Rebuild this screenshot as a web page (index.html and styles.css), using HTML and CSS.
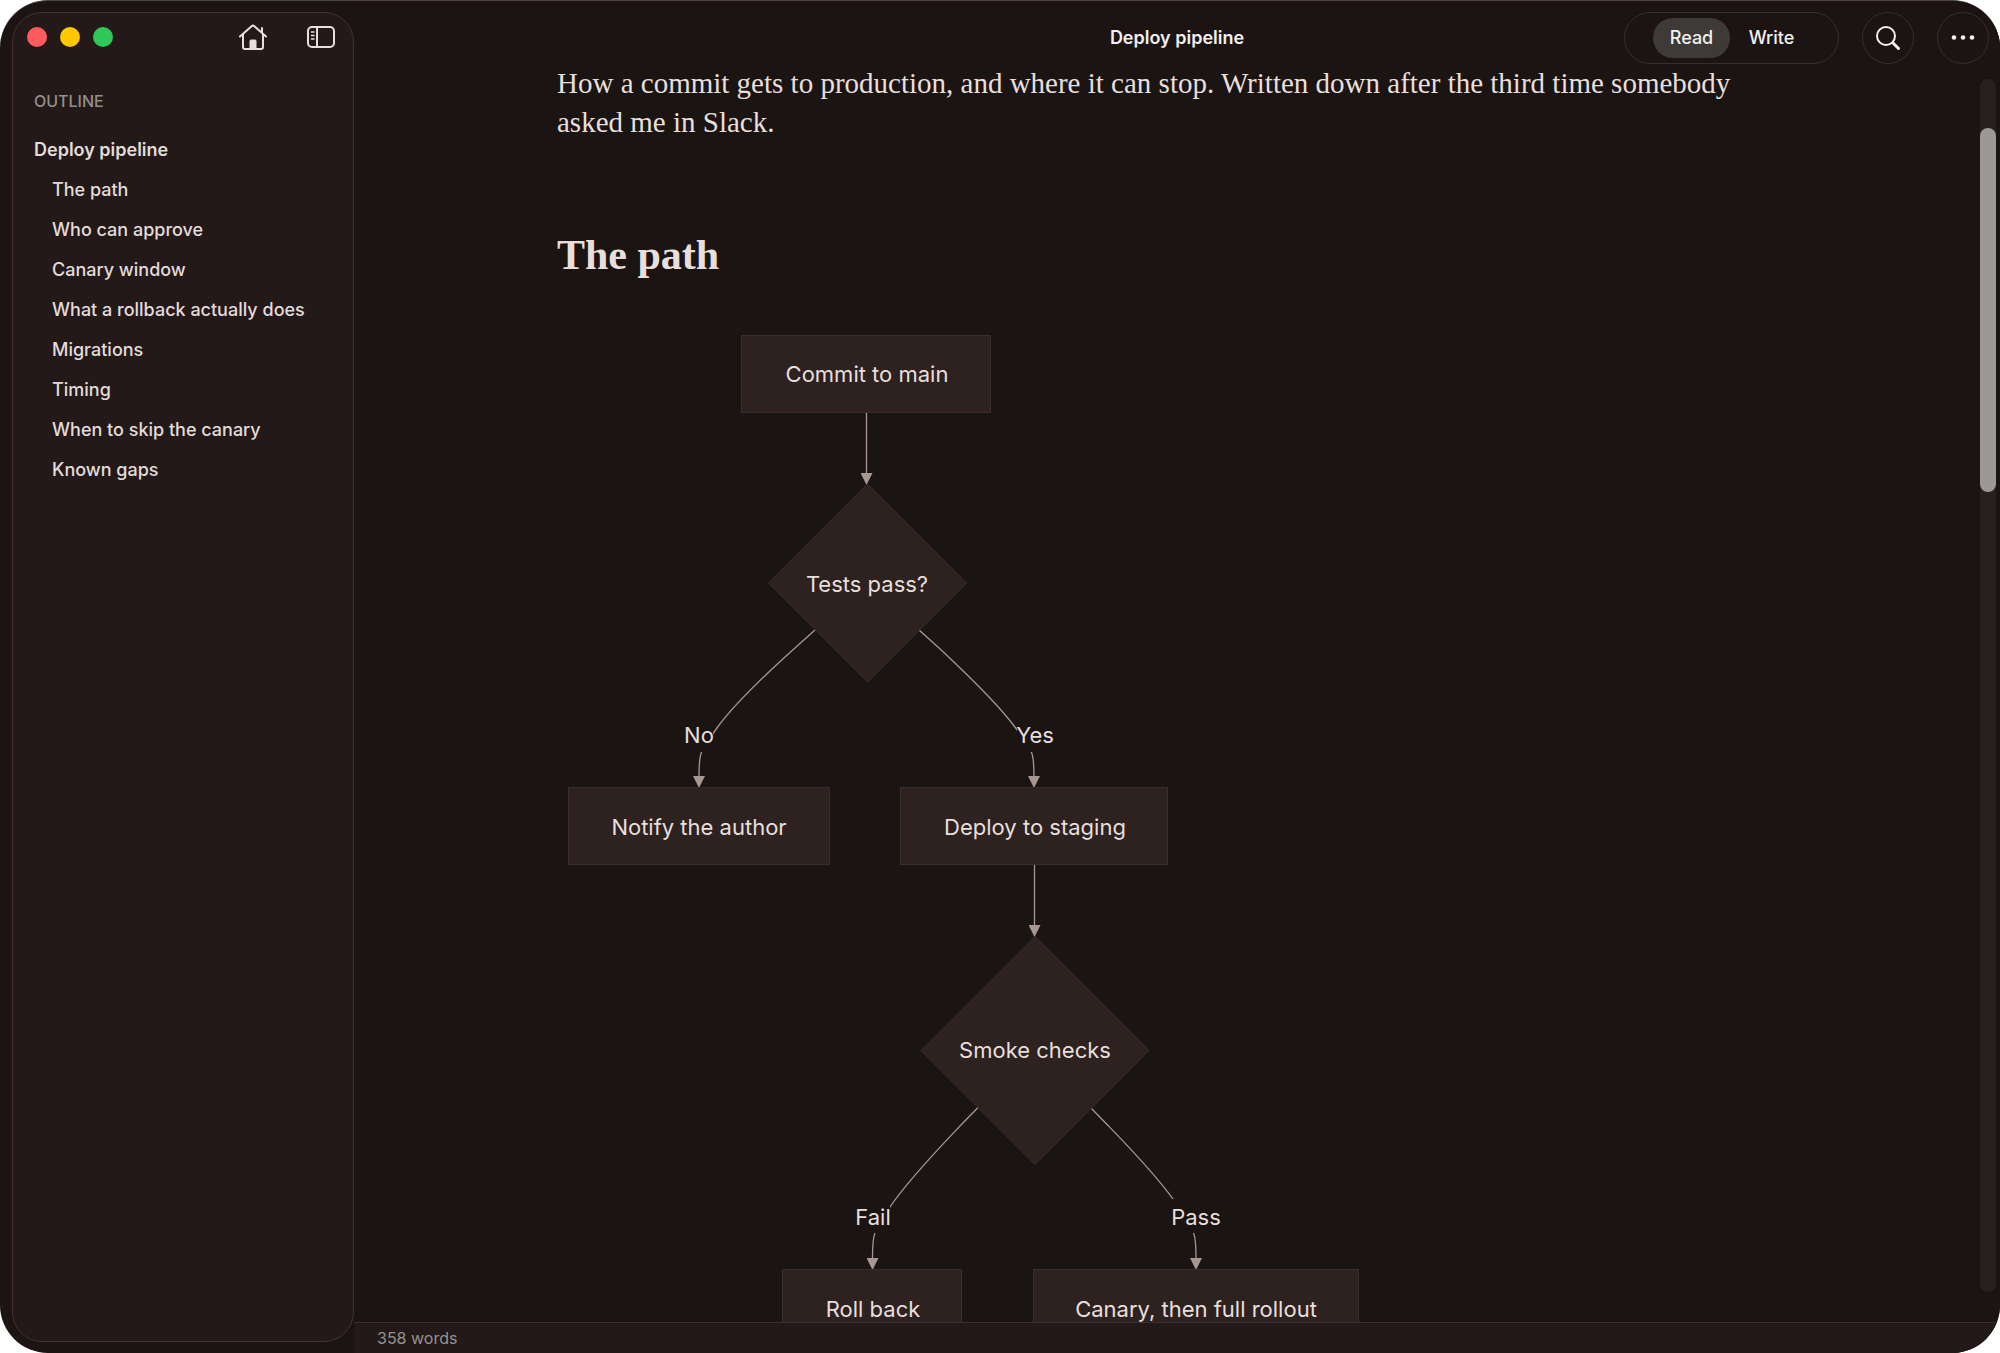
FILE: index.html
```html
<!DOCTYPE html>
<html lang="en">
<head>
<meta charset="utf-8">
<title>Deploy pipeline</title>
<link rel="stylesheet" href="styles.css">
</head>
<body>
<div class="window">
  <aside class="sidebar">
    <div class="sidebar-bar">
      <div class="lights">
        <button class="light close" aria-label="Close"></button>
        <button class="light minimize" aria-label="Minimize"></button>
        <button class="light zoom" aria-label="Zoom"></button>
      </div>
      <div class="sidebar-tools">
        <button class="tool" aria-label="Home">
          <svg width="30" height="28" viewBox="0 0 30 28" fill="none" stroke="currentColor" stroke-width="2" stroke-linecap="round" stroke-linejoin="round">
            <path d="M2 13.500 13.600 3.200q1.400-1.200 2.800 0L28 13.500M5 11.500v12.500q0 2 2 2h16q2 0 2-2V11.500M24 9.500V5"/>
            <path d="M12 26v-8q0-1 1-1h4q1 0 1 1V26z" fill="currentColor" stroke-width="1"/>
          </svg>
        </button>
        <button class="tool" aria-label="Toggle sidebar">
          <svg width="30" height="28" viewBox="0 0 30 28" fill="none" stroke="currentColor" stroke-width="2" stroke-linecap="round">
            <rect x="2" y="4" width="26" height="20" rx="4"/>
            <path d="M11 4v20"/>
            <path d="M5.500 9h2.500M5.500 12.500h2.500M5.500 16h2.500" stroke-width="1.500"/>
          </svg>
        </button>
      </div>
    </div>
    <nav class="outline" aria-labelledby="outline-title">
      <h2 class="outline-title" id="outline-title">OUTLINE</h2>
      <a class="outline-link root" href="#top">Deploy pipeline</a>
      <a class="outline-link" href="#the-path">The path</a>
      <a class="outline-link" href="#approve">Who can approve</a>
      <a class="outline-link" href="#canary">Canary window</a>
      <a class="outline-link" href="#rollback">What a rollback actually does</a>
      <a class="outline-link" href="#migrations">Migrations</a>
      <a class="outline-link" href="#timing">Timing</a>
      <a class="outline-link" href="#skip">When to skip the canary</a>
      <a class="outline-link" href="#gaps">Known gaps</a>
    </nav>
  </aside>

  <div class="main">
    <header class="toolbar">
      <h1 class="title">Deploy pipeline</h1>
      <div class="actions">
        <div class="modes">
          <button class="mode active">Read</button>
          <button class="mode">Write</button>
        </div>
        <button class="round" aria-label="Search">
          <svg width="26" height="26" viewBox="0 0 26 26" fill="none" stroke="currentColor" stroke-linecap="round">
            <circle cx="11" cy="11" r="9" stroke-width="2"/>
            <path d="M18 18l5.500 5.500" stroke-width="3"/>
          </svg>
        </button>
        <button class="round" aria-label="More">
          <svg width="26" height="26" viewBox="0 0 26 26" fill="currentColor">
            <circle cx="4" cy="12.500" r="2.300"/><circle cx="13" cy="12.500" r="2.300"/><circle cx="22" cy="12.500" r="2.300"/>
          </svg>
        </button>
      </div>
    </header>

    <div class="reader">
      <article class="page" id="top">
        <p class="lead">How a commit gets to production, and where it can stop. Written down after the third time somebody asked me in Slack.</p>
        <h2 class="section" id="the-path">The path</h2>
        <svg class="diagram" width="810" height="1028" viewBox="0 0 810 1028" role="img" aria-label="Deploy pipeline flowchart">
          <defs>
            <marker id="arrow" viewBox="0 0 12 12" refX="0" refY="6" markerWidth="12" markerHeight="12" markerUnits="userSpaceOnUse" orient="auto">
              <path class="head" d="M0 0 12 6 0 12z"/>
            </marker>
          </defs>
          <g class="edges">
            <path d="M309.500 94V154"/>
            <path d="M258 311L238.500 328.500C219 346 180.500 381 161 407.500C142 434 142 434 142 457"/>
            <path d="M362 311L381.500 328.500C400 346 438 381 457.500 407.500C477 434 477 434 477 457"/>
            <path d="M477.500 546V606"/>
            <path d="M421 788.500L403.500 806.500C386 825 351 861 333 888C315.500 915 315.500 915 315.500 939"/>
            <path d="M534.500 789.500L552 807.500C569 825 604 861 621.500 888C639 915 639 915 639 939"/>
          </g>
          <g class="masks">
            <rect x="127" y="399" width="29" height="34"/>
            <rect x="460" y="399" width="35" height="34"/>
            <rect x="298" y="880" width="35" height="34"/>
            <rect x="615" y="880" width="48" height="34"/>
          </g>
          <g class="nodes">
            <rect x="184.500" y="16.500" width="249" height="77"/>
            <path d="M310.500 165 409.500 264 310.500 363 211.500 264z"/>
            <rect x="11.500" y="468.500" width="261" height="77"/>
            <rect x="343.500" y="468.500" width="267" height="77"/>
            <path d="M478 617.500 592 731.500 478 845.500 364 731.500z"/>
            <rect x="225.500" y="950.500" width="179" height="77"/>
            <rect x="476.500" y="950.500" width="325" height="77"/>
          </g>
          <g class="labels">
            <text x="310" y="63">Commit to main</text>
            <text x="310" y="273">Tests pass?</text>
            <text x="142" y="424">No</text>
            <text x="478" y="424">Yes</text>
            <text x="142" y="516">Notify the author</text>
            <text x="478" y="516">Deploy to staging</text>
            <text x="478" y="739">Smoke checks</text>
            <text x="316" y="906">Fail</text>
            <text x="639" y="906">Pass</text>
            <text x="316" y="998">Roll back</text>
            <text x="639" y="998">Canary, then full rollout</text>
          </g>
        </svg>
      </article>
    </div>

    <footer class="status">358 words</footer>
    <div class="scrollbar"><div class="thumb"></div></div>
  </div>
</div>
</body>
</html>
```
FILE: styles.css
```css
* { box-sizing: border-box; }

body {
  margin: 0;
  background: #fff;
  color: #e8dfdd;
  font-family: Inter, "Liberation Sans", sans-serif;
}

button {
  margin: 0;
  padding: 0;
  border: 0;
  background: none;
  color: inherit;
  font: inherit;
}

svg { display: block; }

.window {
  display: flex;
  height: 100vh;
  overflow: hidden;
  border-radius: 48px;
  border-top: 1px solid #4a4543;
  background: #1b1412;
}

/* Sidebar */
.sidebar {
  flex: none;
  width: 342px;
  margin: 11px 0 11px 12px;
  border: 1px solid #46332f;
  border-radius: 30px;
  background: #221918;
}

.sidebar-bar {
  display: flex;
  align-items: center;
  justify-content: space-between;
  height: 48px;
  padding: 0 17px 0 14px;
}

.lights { display: flex; gap: 13px; }

.light {
  width: 20px;
  height: 20px;
  border-radius: 50%;
}

.close { background: #ff5a5f; }
.minimize { background: #fdc800; }
.zoom { background: #31c658; }

.sidebar-tools { display: flex; gap: 38px; }

.outline {
  display: flex;
  flex-direction: column;
  padding: 25px 21px;
}

.outline-title {
  margin: 0 0 14px;
  font-size: 16px;
  font-weight: 500;
  line-height: 30px;
  color: #958e8b;
}

.outline-link {
  padding-left: 18px;
  font-size: 18px;
  font-weight: 500;
  line-height: 40px;
  color: #e3dcda;
  text-decoration: none;
}

.root { padding-left: 0; font-weight: 600; }

/* Document pane */
.main {
  position: relative;
  display: flex;
  flex: 1;
  flex-direction: column;
  min-width: 0;
  background: #1a1512;
}

.toolbar {
  display: grid;
  grid-template-columns: 1fr auto 1fr;
  align-items: center;
  flex: none;
  height: 63px;
  padding: 10px 11px 0;
  background: linear-gradient(#1c1312, #1a1512);
}

.title {
  grid-column: 2;
  margin: 0;
  font-size: 18px;
  font-weight: 600;
  color: #f3efee;
}

.actions {
  display: flex;
  justify-content: flex-end;
  gap: 23px;
  color: #f3efee;
}

.modes {
  display: flex;
  align-items: center;
  gap: 3px;
  width: 215px;
  height: 52px;
  padding: 0 28px;
  border: 1px solid #33302d;
  border-radius: 26px;
}

.mode {
  width: 77px;
  height: 40px;
  border-radius: 20px;
  font-size: 18px;
  font-weight: 500;
}

.active { background: #3d3a37; }

.round {
  display: grid;
  place-items: center;
  width: 52px;
  height: 52px;
  border: 1px solid #33302d;
  border-radius: 50%;
}

.reader {
  flex: 1;
  min-height: 0;
  overflow: hidden;
}

.page {
  max-width: 1240px;
  margin: 0 auto;
}

.lead {
  margin: 0;
  font-family: "Liberation Serif", serif;
  font-size: 29px;
  line-height: 39px;
}

.section {
  margin: 88px 0 39px;
  font-family: "Liberation Serif", serif;
  font-size: 42px;
  font-weight: 700;
  line-height: 50px;
}

.edges path { fill: none; stroke: #a89692; stroke-width: 1.3; marker-end: url(#arrow); }
.head { fill: #a89692; }
.masks { fill: #1a1512; }
.nodes { fill: #2d2220; stroke: #3a2e2c; }
.labels { fill: #e8dfdd; font-size: 22px; text-anchor: middle; }

.status {
  flex: none;
  height: 31px;
  padding-left: 23px;
  border-top: 1px solid #3a302e;
  background: #221918;
  font-size: 16px;
  line-height: 30px;
  color: #989290;
}

.scrollbar {
  position: absolute;
  top: 78px;
  right: 4px;
  bottom: 61px;
  width: 16px;
  border-radius: 8px;
  background: #262120;
}

.thumb {
  height: 30%;
  margin-top: 49px;
  border-radius: 8px;
  background: #9c9896;
}
```
